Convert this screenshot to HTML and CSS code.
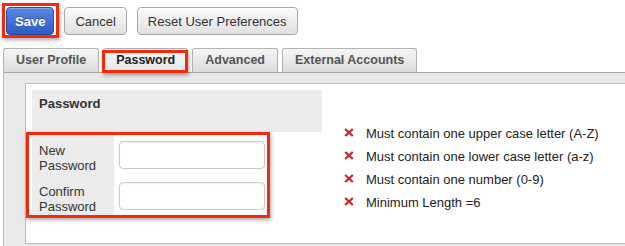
FILE: index.html
```html
<!DOCTYPE html>
<html>
<head>
<meta charset="utf-8">
<link rel="stylesheet" href="styles.css">
</head>
<body>
<div class="toolbar">
  <button class="btn btn-primary annot">Save</button>
  <button class="btn">Cancel</button>
  <button class="btn">Reset User Preferences</button>
</div>
<div class="tabs">
  <div class="tab">User Profile</div>
  <div class="tab active">Password</div>
  <div class="tab">Advanced</div>
  <div class="tab">External Accounts</div>
</div>
<div class="panel">
  <div class="card">
    <div class="left">
      <div class="section-head">Password</div>
      <div class="form">
        <div class="label">New<br>Password</div>
        <div class="field"><input class="input" type="password"></div>
        <div class="label">Confirm<br>Password</div>
        <div class="field"><input class="input" type="password"></div>
      </div>
    </div>
    <ul class="rules">
      <li><svg class="x" width="10" height="9" viewBox="0 0 10 9"><path d="M1.2 1 L8.8 8 M8.8 1 L1.2 8" stroke="#c22a2a" stroke-width="2.3" fill="none"/></svg>Must contain one upper case letter (A-Z)</li>
      <li><svg class="x" width="10" height="9" viewBox="0 0 10 9"><path d="M1.2 1 L8.8 8 M8.8 1 L1.2 8" stroke="#c22a2a" stroke-width="2.3" fill="none"/></svg>Must contain one lower case letter (a-z)</li>
      <li><svg class="x" width="10" height="9" viewBox="0 0 10 9"><path d="M1.2 1 L8.8 8 M8.8 1 L1.2 8" stroke="#c22a2a" stroke-width="2.3" fill="none"/></svg>Must contain one number (0-9)</li>
      <li><svg class="x" width="10" height="9" viewBox="0 0 10 9"><path d="M1.2 1 L8.8 8 M8.8 1 L1.2 8" stroke="#c22a2a" stroke-width="2.3" fill="none"/></svg>Minimum Length =6</li>
    </ul>
  </div>
</div>
</body>
</html>
```

FILE: styles.css
```css
* { box-sizing: border-box; }

body {
  margin: 0;
  background: #fff;
  font-family: "Liberation Sans", Arial, sans-serif;
  font-size: 13px;
  color: #333;
  overflow: hidden;
}

.toolbar {
  display: flex;
  gap: 10px;
  padding: 7px 0 0 6px;
}

.btn {
  position: relative;
  height: 28px;
  padding: 0 10px;
  border: 1px solid #a9a9a9;
  border-radius: 4px;
  background: linear-gradient(#fbfbfb, #e0e0e0);
  box-shadow: inset 0 1px 0 #fff;
  font: 13px "Liberation Sans", Arial, sans-serif;
  color: #333;
}

.btn-primary {
  padding: 0 8px;
  font-weight: bold;
  color: #fff;
  border-color: #2a4ca0;
  background: linear-gradient(#5c87e2, #2d5ac4);
  box-shadow: inset 0 1px 0 rgba(255,255,255,.25);
  text-shadow: 0 -1px 0 rgba(0,0,0,.25);
}

.annot::after {
  content: "";
  position: absolute;
  left: -5px;
  top: -5px;
  right: -6px;
  bottom: -4px;
  border: 3px solid #f52a0c;
  box-shadow: 1px 2px 4px rgba(0,0,0,.35);
  pointer-events: none;
}

.tabs {
  display: flex;
  gap: 4px;
  margin-top: 13px;
  padding-left: 3px;
}

.tab {
  position: relative;
  height: 24px;
  padding: 0 12px;
  border: 1px solid #b3b3b3;
  border-bottom: none;
  border-radius: 3px 3px 0 0;
  background: linear-gradient(#f5f5f5, #dcdcdc);
  font-weight: bold;
  font-size: 12.5px;
  line-height: 23px;
  color: #555;
}

.tab.active {
  color: #222;
  background: linear-gradient(#f8f8f8, #e6e6e6);
}

.tab.active::after {
  content: "";
  position: absolute;
  left: -2px;
  top: 1px;
  right: -1px;
  bottom: -1px;
  border: 3px solid #f52a0c;
  box-shadow: 1px 2px 4px rgba(0,0,0,.35);
}

.panel {
  margin-left: 3px;
  border-left: 1px solid #b8b8b8;
  border-top: 1px solid #a8a8a8;
  background: #e9e9e9;
  padding: 10px 0 2px 21px;
}

.card {
  display: flex;
  background: #fff;
  border: 1px solid #bdbdbd;
  border-right: none;
  padding: 6px 0 28px 6px;
}

.left {
  width: 290px;
  flex: none;
}

.section-head {
  height: 42px;
  background: #ececec;
  padding: 6px 7px 0;
  font-weight: bold;
  line-height: 15px;
  color: #333;
}

.form {
  position: relative;
  display: grid;
  grid-template-columns: 82px 156px;
  width: 238px;
  margin-top: 1px;
}

.form::after {
  content: "";
  position: absolute;
  left: -6px;
  top: -1px;
  right: 0;
  bottom: -3px;
  border: 3px solid #f52a0c;
  box-shadow: 1px 2px 4px rgba(0,0,0,.35);
}

.label {
  height: 41px;
  background: #ebebeb;
  padding: 10px 7px 0;
  line-height: 15px;
  color: #333;
}

.field {
  height: 41px;
  padding: 8px 0 0 5px;
}

.input {
  display: block;
  width: 146px;
  height: 28px;
  border: 1px solid #c9c9c9;
  border-radius: 4px;
  background: #fff;
  box-shadow: inset 0 1px 1px rgba(0,0,0,.05);
}

.rules {
  list-style: none;
  margin: 0;
  padding: 32px 0 0 22px;
}

.rules li {
  display: flex;
  align-items: center;
  gap: 12px;
  line-height: 23px;
  color: #222;
  white-space: nowrap;
}

.x {
  flex: none;
  margin-bottom: 3px;
}
```
